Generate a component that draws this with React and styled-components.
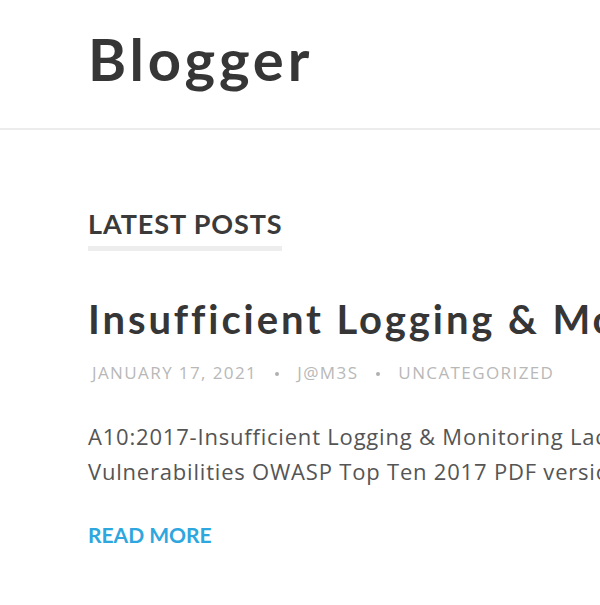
import styled, { createGlobalStyle } from 'styled-components';

const GlobalStyle = createGlobalStyle`
  html, body {
    margin: 0;
    padding: 0;
    background: #fff;
    overflow: hidden;
  }
  body {
    font-family: "Open Sans", "Noto Sans", sans-serif;
  }
`

const post = {
  title: 'Insufficient Logging & Monitoring',
  date: 'January 17, 2021',
  author: 'J@M3S',
  category: 'Uncategorized',
  excerpt: [
    'A10:2017-Insufficient Logging & Monitoring Lack of Logging and Monitoring',
    'Vulnerabilities OWASP Top Ten 2017 PDF version',
  ],
}

const App = () => {
  return (
    <Page>
      <GlobalStyle />
      <Header>
        <SiteTitle>Blogger</SiteTitle>
      </Header>
      <Main>
        <SectionTitle>Latest Posts</SectionTitle>
        <Post>
          <PostTitle>{post.title}</PostTitle>
          <Meta>
            <span>{post.date}</span>
            <Dot />
            <span>{post.author}</span>
            <Dot />
            <span>{post.category}</span>
          </Meta>
          <Excerpt>
            {post.excerpt.map((line) => (
              <Line key={line}>{line}</Line>
            ))}
          </Excerpt>
          <ReadMore href="#">Read More</ReadMore>
        </Post>
      </Main>
    </Page>
  )
}

export default App

const Page = styled.div`
  width: 1100px;
  min-height: 605px;
`

const Header = styled.header`
  padding: 30px 0 40px 88px;
  border-bottom: 2px solid #ececec;
`

const SiteTitle = styled.h1`
  margin: 0;
  font-family: "Lato", "Noto Sans", sans-serif;
  font-weight: 700;
  font-size: 58px;
  line-height: 58px;
  letter-spacing: 3.8px;
  color: #363636;
`

const Main = styled.main`
  padding: 78px 0 0 88px;
  display: flex;
  flex-direction: column;
  align-items: flex-start;
`

const SectionTitle = styled.h2`
  margin: 0;
  padding-bottom: 6px;
  border-bottom: 5px solid #ededed;
  font-family: "Lato", "Noto Sans", sans-serif;
  font-weight: 700;
  font-size: 27px;
  line-height: 32px;
  letter-spacing: 0.9px;
  text-transform: uppercase;
  color: #3a3a3a;
`

const Post = styled.article`
  margin-top: 44px;
  display: flex;
  flex-direction: column;
  align-items: flex-start;
`

const PostTitle = styled.h3`
  margin: 0;
  white-space: nowrap;
  font-family: "Lato", "Noto Sans", sans-serif;
  font-weight: 700;
  font-size: 40px;
  line-height: 48px;
  letter-spacing: 2.9px;
  color: #363636;
`

const Meta = styled.div`
  display: flex;
  align-items: center;
  gap: 16px;
  margin-top: 20px;
  padding-left: 4px;
  font-size: 17px;
  line-height: 20px;
  letter-spacing: 1.4px;
  text-transform: uppercase;
  color: #b8b8b8;
`

const Dot = styled.span`
  width: 4px;
  height: 4px;
  border-radius: 50%;
  background: #b0b0b0;
  margin: 2px 2px 0;
`

const Excerpt = styled.div`
  margin-top: 36px;
  font-size: 22px;
  line-height: 35px;
  letter-spacing: 0.8px;
  color: #555;
`

const Line = styled.div`
  white-space: nowrap;
`

const ReadMore = styled.a`
  margin-top: 32px;
  font-family: "Lato", "Noto Sans", sans-serif;
  font-weight: 700;
  font-size: 21px;
  line-height: 28px;
  text-transform: uppercase;
  text-decoration: none;
  color: #2ea6de;
`
